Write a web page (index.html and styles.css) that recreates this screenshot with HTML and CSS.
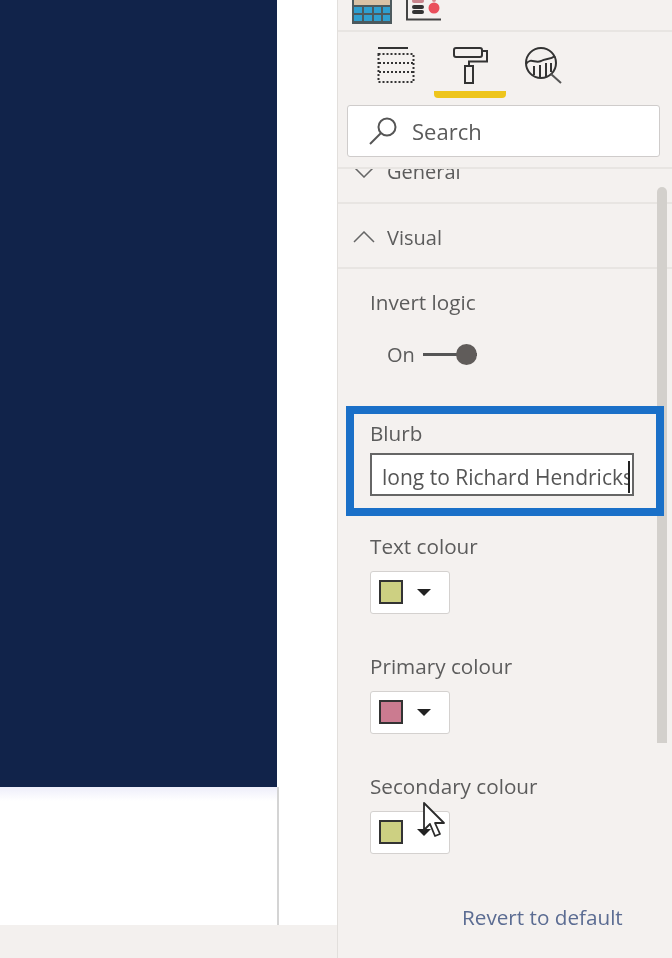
FILE: index.html
```html
<!DOCTYPE html>
<html lang="en">
  <head>
    <meta charset="UTF-8" />
    <meta name="viewport" content="width=device-width, initial-scale=1.0" />
    <title>Format pane</title>
    <link rel="stylesheet" href="styles.css">
  </head>

  <body>
    <div class="report">
      <div class="report-top">
        <div class="canvas"></div>
        <div class="canvas-rest"></div>
      </div>
      <div class="report-foot"></div>
    </div>

    <div class="panel">
      <div class="top-icons">
        <svg class="table-icon" width="40" height="24" viewBox="0 0 40 24">
          <rect x="0" y="0" width="40" height="24" fill="#4d5a5e" />
          <rect x="2" y="0" width="36" height="5" fill="#d9c2a6" />
          <g fill="#2f9fd0">
            <rect x="2" y="7" width="8" height="6" />
            <rect x="12" y="7" width="8" height="6" />
            <rect x="22" y="7" width="7" height="6" />
            <rect x="31" y="7" width="7" height="6" />
            <rect x="2" y="15" width="8" height="6" />
            <rect x="12" y="15" width="8" height="6" />
            <rect x="22" y="15" width="7" height="6" />
            <rect x="31" y="15" width="7" height="6" />
          </g>
        </svg>
        <svg class="model-icon" width="36" height="22" viewBox="0 0 36 22">
          <path d="M1 0V19.500H35" fill="none" stroke="#444" stroke-width="2" />
          <path d="M8 1h8" stroke="#c9848c" stroke-width="4" stroke-linecap="round" />
          <path d="M8 7h8M8 12h8" stroke="#333" stroke-width="4" stroke-linecap="round" />
          <circle cx="28" cy="8" r="5.500" fill="#ea4f5c" />
          <circle cx="28" cy="0" r="2" fill="#d88a90" />
        </svg>
      </div>

      <div class="tabs">
        <div class="tab tab-fields">
          <svg width="38" height="38" viewBox="0 0 38 38" fill="none" stroke="#333">
            <path d="M1 1H31" stroke-width="2" />
            <rect x="1.500" y="7" width="35" height="28" stroke-width="2" stroke-dasharray="2 2" />
            <path d="M2 16H36M2 25H36" stroke-width="2" stroke-dasharray="2 2" />
          </svg>
        </div>
        <div class="tab tab-format">
          <svg width="38" height="38" viewBox="0 0 38 38" fill="none" stroke="#333" stroke-width="2">
            <rect x="2" y="1" width="28" height="9" rx="2" />
            <path d="M30 4H35V14.500H17V19" />
            <rect x="13" y="19" width="8" height="17" />
          </svg>
        </div>
        <div class="tab tab-analytics">
          <svg width="40" height="40" viewBox="0 0 40 40" fill="none" stroke="#333" stroke-width="2">
            <circle cx="16" cy="16" r="15" />
            <path d="M1 17C6 10 10 17 16 14C21 11 25 13 30 9" />
            <path d="M9 19V28M15 18V31M21 16V30M26 16V25" />
            <path d="M26 27L36 36" stroke="#555" />
          </svg>
        </div>
      </div>

      <div class="search">
        <svg width="28" height="28" viewBox="0 0 28 28" fill="none" stroke="#555" stroke-width="2">
          <circle cx="18" cy="10" r="8.500" />
          <path d="M12 16L1 27" />
        </svg>
        <span>Search</span>
      </div>

      <div class="scroll-area">
        <div class="section section-general">
          <svg width="22" height="12" viewBox="0 0 22 12" fill="none" stroke="#666" stroke-width="1.500"><path d="M1 1L11 11L21 1" /></svg>
          <span>General</span>
        </div>
        <div class="section section-visual">
          <svg width="22" height="12" viewBox="0 0 22 12" fill="none" stroke="#666" stroke-width="1.500"><path d="M1 11L11 1L21 11" /></svg>
          <span>Visual</span>
        </div>

        <div class="fields">
          <div class="field-label label-invert">Invert logic</div>
          <div class="toggle">
            <span>On</span>
            <div class="toggle-track"><div class="toggle-knob"></div></div>
          </div>

          <div class="field-label label-blurb">Blurb</div>
          <div class="text-box"><div class="text-box-value">long to Richard Hendricks</div></div>

          <div class="field-label label-text">Text colour</div>
          <div class="colour-btn">
            <div class="swatch swatch-green"></div>
            <div class="caret"></div>
          </div>

          <div class="field-label label-colour">Primary colour</div>
          <div class="colour-btn">
            <div class="swatch swatch-pink"></div>
            <div class="caret"></div>
          </div>

          <div class="field-label label-colour">Secondary colour</div>
          <div class="colour-btn">
            <div class="swatch swatch-green"></div>
            <div class="caret"></div>
          </div>

          <div class="revert">Revert to default</div>
        </div>

        <div class="scrollbar"></div>
      </div>

      <div class="highlight"></div>
      <svg class="cursor" width="24" height="36" viewBox="0 0 24 36">
        <path d="M1 1V28L7 22L12 34L17 32L12 21H21Z" fill="#fff" stroke="#2b2b2b" stroke-width="1.800" stroke-linejoin="round" />
      </svg>
    </div>
  </body>
</html>
```

FILE: styles.css
```css
* {
  padding: 0;
  margin: 0;
  box-sizing: border-box;
}

body {
  width: 672px;
  height: 958px;
  display: flex;
  overflow: hidden;
  background: white;
  font-family: "Open Sans", "Noto Sans", sans-serif;
  color: #5c5c5c;
  filter: blur(0.4px);
}

.report {
  width: 337px;
  display: flex;
  flex-direction: column;
}

.report-top {
  height: 925px;
  background: white;
}

.canvas {
  width: 277px;
  height: 787px;
  background: #11234a;
}

.canvas-rest {
  width: 279px;
  height: 138px;
  border-right: 2px solid #d4d4d4;
  background: linear-gradient(#eeeefa, white 14px);
}

.report-foot {
  flex: 1;
  background: #f3f0ee;
}

.panel {
  position: relative;
  flex: 1;
  background: #f4f1ef;
  border-left: 1px solid #e2dfdc;
}

.top-icons {
  height: 32px;
  display: flex;
  align-items: flex-start;
  gap: 14px;
  padding-left: 14px;
  border-bottom: 2px solid #e8e5e2;
}

.tabs {
  height: 67px;
  display: flex;
  padding-left: 39px;
}

.tab {
  height: 66px;
  padding-top: 15px;
}

.tab-fields {
  width: 57px;
}

.tab-format {
  width: 72px;
  padding-left: 18px;
  border-bottom: 7px solid #eec51c;
  border-radius: 0 0 4px 4px;
}

.tab-analytics {
  margin-left: 19px;
}

.search {
  width: 313px;
  height: 52px;
  margin: 6px 0 0 9px;
  display: flex;
  align-items: center;
  gap: 15px;
  padding-left: 21px;
  background: white;
  border: 1px solid #cfcccb;
  border-radius: 3px;
  font-size: 22px;
  color: #5a5a5a;
}

.scroll-area {
  position: relative;
  height: 791px;
  margin-top: 10px;
  overflow: hidden;
  border-top: 2px solid #e8e5e2;
}

.section {
  display: flex;
  align-items: center;
  gap: 12px;
  padding-left: 15px;
  font-size: 20px;
  border-bottom: 2px solid #e8e5e2;
}

.section-general {
  height: 63px;
  margin-top: -28px;
}

.section-visual {
  height: 65px;
  padding-top: 3px;
}

.fields {
  padding-left: 32px;
  font-size: 20.700px;
}

.field-label {
  line-height: 28px;
}

.label-invert {
  margin-top: 19px;
}

.toggle {
  display: flex;
  align-items: center;
  gap: 8px;
  margin-top: 26px;
  padding-left: 17px;
  height: 24px;
  font-size: 20px;
}

.toggle-track {
  position: relative;
  width: 54px;
  height: 3px;
  background: #555;
}

.toggle-knob {
  position: absolute;
  right: 0;
  top: -9px;
  width: 21px;
  height: 21px;
  border-radius: 50%;
  background: #605c5a;
}

.label-blurb {
  margin-top: 53px;
}

.text-box {
  position: relative;
  width: 264px;
  height: 43px;
  margin-top: 6px;
  padding-left: 10px;
  border: 2px solid #666;
  background: white;
  font-size: 21px;
  color: #555;
}

.text-box-value {
  width: 248px;
  overflow: hidden;
  white-space: nowrap;
  border-right: 2px solid #222;
  line-height: 32px;
  margin-top: 6px;
}

.label-text {
  margin-top: 36px;
}

.colour-btn {
  display: flex;
  align-items: center;
  gap: 14px;
  width: 80px;
  height: 43.500px;
  margin-top: 10.500px;
  padding-left: 8px;
  background: white;
  border: 1px solid #d4d1cf;
  border-radius: 3px;
}

.swatch {
  width: 24px;
  height: 24px;
  border: 2px solid #333;
}

.swatch-green {
  background: #cdd082;
}

.swatch-pink {
  background: #cb7b90;
}

.caret {
  width: 0;
  height: 0;
  border-left: 7px solid transparent;
  border-right: 7px solid transparent;
  border-top: 7px solid #222;
}

.label-colour {
  margin-top: 38px;
}

.revert {
  margin: 48.500px 0 0 92px;
  line-height: 28px;
  color: #5b6c92;
}

.scrollbar {
  position: absolute;
  left: 319px;
  top: 18px;
  width: 10px;
  height: 556px;
  border-radius: 5px 5px 0 0;
  background: #d3d0cc;
}

.highlight {
  position: absolute;
  left: 8px;
  top: 406px;
  width: 318px;
  height: 110px;
  border: 8px solid #1a70c8;
}

.cursor {
  position: absolute;
  left: 85px;
  top: 802px;
}
```
